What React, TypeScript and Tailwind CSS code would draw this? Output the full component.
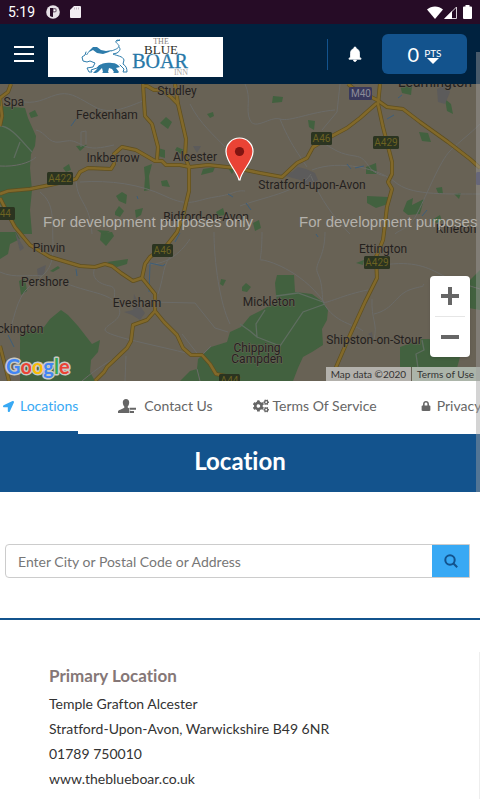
import { FaCogs, FaLocationArrow, FaLock } from "react-icons/fa";
import { MdNotifications } from "react-icons/md";

interface Label {
  text: string;
  x: number;
  y: number;
}

const PLACES: Label[] = [
  { text: "n Spa", x: 9, y: 22 },
  { text: "Studley", x: 177, y: 11 },
  { text: "Feckenham", x: 107, y: 35 },
  { text: "Inkberrow", x: 113, y: 78 },
  { text: "Alcester", x: 195, y: 77 },
  { text: "Stratford-upon-Avon", x: 312, y: 105 },
  { text: "Bidford-on-Avon", x: 206, y: 137 },
  { text: "Kineton", x: 456, y: 149 },
  { text: "Pinvin", x: 49, y: 168 },
  { text: "Ettington", x: 383, y: 169 },
  { text: "Pershore", x: 45, y: 202 },
  { text: "Evesham", x: 137, y: 223 },
  { text: "Mickleton", x: 269, y: 222 },
  { text: "Eckington", x: 17, y: 249 },
  { text: "Shipston-on-Stour", x: 374, y: 260 },
  { text: "Chipping", x: 257, y: 268 },
  { text: "Campden", x: 257, y: 279 },
];

const SHIELDS = [
  { text: "A422", x: 47, y: 88, w: 26 },
  { text: "A44", x: -11, y: 123, w: 26 },
  { text: "A46", x: 311, y: 48, w: 21 },
  { text: "A429", x: 373, y: 52, w: 26 },
  { text: "A46", x: 152, y: 160, w: 21 },
  { text: "A429", x: 364, y: 172, w: 26 },
  { text: "A44", x: 219, y: 290, w: 21 },
];

const GREENS = [
  "M0 22L25 24 28 34 36 52 35 62 31 70 30 84 32 106 30 126 32 150 21 150 10 137 0 120Z",
  "M0 148L16 148 20 155 10 160 8 170 0 175Z",
  "M20 248L44 243 50 235 61 226 68 231 78 242 92 260 100 256 98 268 91 276 90 288 95 297 20 297Z",
  "M180 297L190 287 197 285 198 275 211 263 227 258 230 248 241 243 250 232 262 226 277 217 276 211 275 199 277 191 294 191 295 208 312 210 323 218 328 226 327 236 322 245 323 261 312 268 303 273 298 284 293 297Z",
  "M400 263L422 255 428 255 460 258 460 273 457 284 400 283Z",
  "M470 196L480 186V226L469 224Z",
  "M101 149L112 148 114 152 106 162 100 156Z",
  "M160 39L166 33 172 38 168 45Z",
  "M158 64L165 66 165 74 158 72Z",
  "M177 63L184 66 181 70 175 66Z",
  "M144 83L152 80 149 92 150 106 144 107 145 94Z",
  "M161 97L167 96 170 103 162 102Z",
  "M116 112L122 108 127 111 126 120 119 117Z",
  "M115 128L119 122 124 127 120 133 115 131Z",
  "M135 126L143 124 141 131 136 134Z",
  "M203 85L215 83 213 88 201 91Z",
  "M29 29L35 26 38 32 31 34Z",
  "M63 84L69 80 71 86 66 88Z",
  "M76 62L87 61 80 67Z",
  "M207 30L213 28 214 32 210 34Z",
  "M228 84L233 78 236 83 232 90Z",
  "M216 128L223 124 225 131 218 132Z",
  "M97 146L110 147 104 151Z",
  "M107 178L128 175 127 180 117 183Z",
  "M50 187L58 182 60 184 53 188Z",
  "M19 197L25 194 27 207 21 211Z",
  "M221 195L226 196 223 202 220 200Z",
  "M273 12L283 13 282 18 272 19Z",
  "M308 36L315 37 314 46 309 43Z",
  "M400 1L412 2 411 11 402 9Z",
  "M445 15L451 20 453 30 447 27Z",
  "M419 48L428 49 431 58 422 57Z",
  "M366 83L376 79 377 90 366 90Z",
  "M367 112L388 113 388 120 376 124 367 119Z",
  "M407 117L413 114 412 121 424 115 420 130 408 131 403 127Z",
  "M436 104L442 103 443 110 438 109Z",
  "M454 110L461 109 459 115Z",
  "M432 136L440 131 442 137 436 139Z",
  "M253 139L259 136 261 144 255 147Z",
  "M242 203L246 199 251 203 247 208 242 207Z",
  "M356 179L364 176 363 181Z",
];

const LANES = [
  "M24 18C40 20 48 12 60 10S80 15 95 23 125 24 143 17",
  "M0 82C15 83 30 79 36 73",
  "M36 46C46 48 48 60 60 58S72 56 82 61 100 64 114 61",
  "M81 63V48L86 47V60",
  "M80 98C110 96 140 100 165 112S195 116 215 113 235 106 245 107",
  "M76 97C78 120 90 118 92 150",
  "M40 108C55 120 52 135 53 160S45 190 30 202 14 240 8 250",
  "M60 197C90 210 110 208 118 222S105 240 105 246 160 262 190 270",
  "M118 222L150 218 195 219 215 244 228 248",
  "M145 180C165 182 180 170 190 155",
  "M158 210C165 190 162 180 173 170",
  "M190 20C200 40 215 52 225 63",
  "M245 0C252 15 245 25 250 36S270 32 280 35 310 28 335 26",
  "M280 35C290 60 300 72 307 83",
  "M311 90C300 108 260 114 240 122",
  "M311 92C320 115 335 135 350 150",
  "M312 86C340 75 380 85 395 98S440 110 480 110",
  "M480 40C470 50 460 57 450 67S427 110 418 128 400 145 395 150",
  "M325 60C335 66 340 70 355 72S365 88 385 92",
  "M340 0L337 28 322 46",
  "M325 148C325 175 313 180 318 190S322 215 323 218 345 210 368 206",
  "M323 218C335 240 355 240 363 247",
  "M372 215C371 235 378 240 374 255",
  "M374 230C395 225 395 210 412 205S420 205 424 200",
  "M262 148C262 178 258 176 262 176S300 185 324 218",
  "M377 182C410 176 425 182 440 190S480 205 480 205",
  "M214 148C214 178 220 220 230 240",
  "M0 188C15 195 30 190 42 192",
  "M95 183C90 195 100 200 110 202S110 220 115 222",
  "M126 272L125 297 M82 297C100 282 105 280 125 268",
  "M182 250L200 273 211 262 M197 285L200 297",
];

const RIDGES = [
  "M240 240L250 247 257 253 256 240 265 226",
  "M257 253L280 262 303 228 325 220",
  "M276 212L298 209 323 218",
  "M0 42C10 42 20 55 32 68",
  "M20 58L14 74",
  "M422 256L424 266 416 270 418 284",
];

const TOWNS = [
  "M37 185L46 181 44 190 38 193Z",
  "M124 228L133 226 134 210 140 222 145 229 140 236 132 231Z",
  "M282 91L292 88 298 83 306 85 315 89 318 96 308 103 300 96Z",
  "M437 5L446 0 450 8 445 20 438 18Z",
  "M193 62L201 62 197 69Z",
  "M15 148L24 164 20 167Z",
  "M368 250L372 248 373 254Z",
];

const STREAMS = [
  "M183 134L178 143 M180 149L175 158 M150 180L149 208",
  "M150 179L163 182 165 180 M76 185L77 192",
  "M387 35L394 31 M347 80L351 85 M355 84L364 82",
  "M422 132L427 126 M246 119L251 126 M228 110L233 113",
  "M76 35L71 42 M137 112L138 115 M8 251L14 263 M316 150L318 153 M398 14L402 11",
];

const ROADS = [
  "M0 110L8 107 30 105 50 101 76 95 80 88 88 84 111 85 114 80 114 70 122 63 136 66 155 77 162 77 166 81 180 81 190 83 208 81 236 84 260 89 282 93 297 79 307 74 313 63 332 52 347 44 360 34 377 19",
  "M143 0L145 32 152 40 158 63 157 76",
  "M143 2L147 2 154 6 162 6 171 13 178 20",
  "M175 0L178 20 186 55 185 73 189 83 189 107 183 132 177 148 167 161 150 173 145 180 142 194 133 197 121 189 112 182 105 180 95 183 80 182 50 173 30 161 15 143 8 130 0 114",
  "M142 194L155 210 155 227 164 238 177 251 183 264 191 271 202 271 210 280 216 290 240 295",
  "M155 227L147 236 133 241 131 257 127 264 107 283 104 288 95 297",
  "M0 262L9 297",
  "M11 0L8 8 0 14 M0 14L2 32 0 42",
  "M380 0L378 20 383 43 392 78 392 90 388 98 392 105 387 123 384 148 383 156 376 173 377 194 365 218 350 251 330 297",
  "M348 0L353 4 377 16 387 23 403 25 420 38 448 58 470 75 480 84",
];

const GOOGLE = [
  { letter: "G", fill: "#4285f4" },
  { letter: "o", fill: "#ea4335" },
  { letter: "o", fill: "#fbbc05" },
  { letter: "g", fill: "#4285f4" },
  { letter: "l", fill: "#34a853" },
  { letter: "e", fill: "#ea4335" },
];

function StatusBar() {
  return (
    <div className="flex h-6 items-center justify-between bg-[#260c26] px-2 text-white">
      <div className="flex items-center">
        <span className="w-[38px] font-[Roboto,sans-serif] text-sm">5:19</span>
        <svg width="14" height="14" viewBox="0 0 14 14">
          <circle cx="7" cy="7" r="6.8" fill="#e6e1e6" />
          <path d="M4 3h3v9a5 5 0 0 1-3-1z" fill="#260c26" />
          <path d="M7 3h1.500a2.300 2.300 0 0 1 0 4.600H7z" fill="#7b6a7b" />
          <circle cx="8.500" cy="5.300" r="1" fill="#fff" />
        </svg>
        <svg className="ml-[10px]" width="11" height="14" viewBox="0 0 11 14">
          <path d="M4 1h6a1 1 0 0 1 1 1v10a1 1 0 0 1-1 1H1a1 1 0 0 1-1-1V5z" fill="#f2eef2" />
          <path d="M4.500 2.500v2M6.500 2.500v2M8.500 2.500v2" stroke="#b8adb8" strokeWidth=".8" />
        </svg>
      </div>
      <div className="flex items-center">
        <svg width="16" height="13" viewBox="0 0 16 13">
          <path d="M0 3.500C4.500-.5 11.500-.5 16 3.500L8 13z" fill="#fff" />
        </svg>
        <svg className="ml-px" width="13" height="13" viewBox="0 0 13 13">
          <path d="M12.500 1v11.500H1z" fill="none" stroke="#d6cfd6" />
          <path d="M8 5v8H0z" fill="#fff" />
        </svg>
        <svg className="ml-[6px]" width="9" height="14" viewBox="0 0 9 14">
          <path
            d="M2.500 0h4v1.500H8a1 1 0 0 1 1 1V13a1 1 0 0 1-1 1H1a1 1 0 0 1-1-1V2.500a1 1 0 0 1 1-1h1.500z"
            fill="#fff"
          />
        </svg>
      </div>
    </div>
  );
}

function Logo() {
  return (
    <svg
      className="h-10 w-[175px] bg-white"
      viewBox="0 0 175 40"
      role="img"
      aria-label="The Blue Boar Inn"
    >
      <g fill="none" stroke="#2d7cab" strokeLinejoin="round" strokeLinecap="round">
        <path d="M38 15l-1 3-3 2 1 4 4 1 3-1 5 2-2 4-6 1 2 4 3 0-1-2 6-2 3-3" />
        <path d="M63 14c4-1 8-3 8-5s-4-3-3-5 3 0 4-1l-3 1m2 6c2 2 1 4-2 6l-4 1c4 2 10 2 11 6l-1 4c3 2 4 4 4 8h-4l1-3-4-4" />
      </g>
      <path d="M38 18l3-4 4-4 4 0 4 3 5 1 6-1-3 2-6 2-6-1-4-3-4 2-2 3z" fill="#2d7cab" />
      <path
        d="M50 29c4-3 9-4 14-3 4 0 6 2 8 4l-4 1 3 4-1 1h-5l1-1-2-3-3-1-1 4 1 1h-7l1-1-1-4-4 4-2 1h-3l4-4z"
        fill="#2d7cab"
      />
      <g fontFamily="Liberation Serif, serif" textAnchor="middle">
        <text x="113" y="7" fontSize="8" fill="#85807a">
          THE
        </text>
        <text x="112" y="31" fontSize="20" fill="#2878a8" stroke="#2878a8" strokeWidth=".3">
          BOAR
        </text>
        <text x="113" y="17" fontSize="13" fill="#2c2c26" stroke="#fff" strokeWidth="1" paintOrder="stroke">
          BLUE
        </text>
        <text x="133" y="38" fontSize="8" fill="#aaa69f">
          INN
        </text>
      </g>
    </svg>
  );
}

function Header() {
  return (
    <header className="flex h-[60px] items-center bg-[#00223f] text-white">
      <button type="button" aria-label="Menu" className="ml-[14px] flex w-5 flex-col gap-[4px]">
        <span className="h-[2px] w-full bg-white" />
        <span className="my-px h-[2px] w-full bg-white" />
        <span className="h-[2px] w-full bg-white" />
      </button>
      <a href="#home" className="mt-[6px] ml-[14px]">
        <Logo />
      </a>
      <div className="ml-auto flex items-center">
        <span className="h-[31px] w-px bg-[#13538d]" />
        <button type="button" aria-label="Notifications" className="mx-[15px] flex w-6 justify-center">
          <MdNotifications size={18} stroke="currentColor" strokeWidth={1} />
        </button>
        <button
          type="button"
          className="mr-[13px] flex h-10 w-[85px] items-center justify-center gap-[5px] rounded-md bg-[#13538d]"
        >
          <span className="text-xl">0</span>
          <span className="flex flex-col items-center pt-1 text-[10px] leading-[10px]">
            PTS
            <svg width="12" height="6" viewBox="0 0 12 6">
              <path d="M0 0h12L6 6z" fill="#fff" />
            </svg>
          </span>
        </button>
      </div>
    </header>
  );
}

function MapView() {
  return (
    <div className="relative h-[297px] overflow-hidden bg-[#686255]">
      <svg className="h-full w-full" viewBox="0 0 480 297" preserveAspectRatio="xMidYMid slice">
        <g fill="#42613f">
          {GREENS.map((d) => (
            <path key={d} d={d} />
          ))}
        </g>
        <g fill="#5c5b5b">
          {TOWNS.map((d) => (
            <path key={d} d={d} />
          ))}
        </g>
        <g fill="none" stroke="#6b6b68">
          {LANES.map((d) => (
            <path key={d} d={d} />
          ))}
        </g>
        <g fill="none" stroke="#5f6d60">
          {RIDGES.map((d) => (
            <path key={d} d={d} strokeWidth="1.300" />
          ))}
        </g>
        <g fill="none" stroke="#3d5e7a">
          {STREAMS.map((d) => (
            <path key={d} d={d} />
          ))}
        </g>
        <g fill="none" strokeLinejoin="round">
          {ROADS.map((d) => (
            <path key={d} d={d} stroke="#5f4f1f" strokeWidth="4" />
          ))}
          {ROADS.map((d) => (
            <path key={d} d={d} stroke="#82692a" strokeWidth="2.600" />
          ))}
        </g>
        <g fontFamily="Roboto, sans-serif" fontSize="10" textAnchor="middle">
          {SHIELDS.map((s) => (
            <g key={`${s.text}-${s.x}`}>
              <rect x={s.x} y={s.y} width={s.w} height="13" rx="1.500" fill="#2b3420" />
              <text x={s.x + s.w / 2} y={s.y + 10} fill="#6c6222">
                {s.text}
              </text>
            </g>
          ))}
          <rect x="349" y="3" width="23" height="13" rx="1.500" fill="#39395c" />
          <text x="361" y="13" fill="#8c8c98">
            M40
          </text>
          <rect x="476" y="88" width="12" height="13" rx="1.500" fill="#39395c" />
        </g>
        <g
          fontFamily="Roboto, sans-serif"
          fontSize="12"
          textAnchor="middle"
          fill="#24211e"
          stroke="#6b6458"
          strokeWidth="1"
          paintOrder="stroke"
        >
          {PLACES.map((p) => (
            <text key={p.text} x={p.x} y={p.y}>
              {p.text}
            </text>
          ))}
          <text x="435" y="3" fontSize="14">
            Leamington
          </text>
        </g>
        <g fontFamily="Liberation Sans, sans-serif" fontSize="15" fill="#b4b1ab">
          <text x="43" y="143">
            For development purposes only
          </text>
          <text x="299" y="143">
            For development purposes
          </text>
        </g>
        <path
          d="M239 96C237 87 226 78 226 67.500a13.500 13.500 0 0 1 27 0C253 78 241 87 240 96z"
          fill="#ea4335"
          stroke="#fff"
          strokeWidth="1.200"
        />
        <circle cx="239.500" cy="67.500" r="4.600" fill="#811411" />
      </svg>

      <svg className="absolute bottom-0 left-1" width="72" height="28" viewBox="0 0 72 28">
        <text
          x="2"
          y="21"
          fontFamily="Lato, sans-serif"
          fontSize="20"
          fontWeight="700"
          stroke="#c9c9c5"
          strokeWidth="3"
          strokeLinejoin="round"
          paintOrder="stroke"
        >
          {GOOGLE.map((g, i) => (
            <tspan key={i} fill={g.fill}>
              {g.letter}
            </tspan>
          ))}
        </text>
      </svg>

      <div className="absolute right-[10px] bottom-6 flex w-10 flex-col items-center rounded-sm bg-white text-[#666] shadow">
        <button type="button" aria-label="Zoom in" className="flex h-10 w-full items-center justify-center">
          <svg width="18" height="18" viewBox="0 0 18 18">
            <path d="M7 0h4v7h7v4h-7v7H7v-7H0V7h7z" fill="currentColor" />
          </svg>
        </button>
        <span className="h-px w-[30px] bg-[#e6e6e6]" />
        <button type="button" aria-label="Zoom out" className="flex h-10 w-full items-center justify-center">
          <svg width="18" height="4" viewBox="0 0 18 4">
            <path d="M0 0h18v4H0z" fill="currentColor" />
          </svg>
        </button>
      </div>

      <div className="absolute right-0 bottom-0 flex h-[14px] text-[10px] leading-[14px] text-[#333]">
        <span className="bg-[#b3b1ac] px-[5px]">Map data ©2020</span>
        <a href="#terms" className="ml-px bg-[#acb5aa] pr-[6px] pl-[5px]">
          Terms of Use
        </a>
      </div>
    </div>
  );
}

function PersonIcon() {
  return (
    <svg width="18" height="14" viewBox="0 0 18 14" fill="currentColor">
      <path d="M8 0c2 0 3.200 1.300 3.200 3.200 0 1.700-.6 3.300-1.500 4.200v1.200l1.300.7v2.200h2V14H0v-1.500c0-1.500 4-2.300 6.300-3.800V7.400C5.400 6.500 4.800 4.900 4.800 3.200 4.800 1.300 6 0 8 0z" />
      <path
        d="M11.500 8.800H18v2h-6.500zM11.500 12H16v2h-4.500z"
        stroke="#fff"
        strokeWidth="1"
        paintOrder="stroke"
      />
    </svg>
  );
}

function TabBar() {
  return (
    <nav className="flex h-[53px] overflow-hidden text-sm whitespace-nowrap text-[#666]">
      <a
        href="#locations"
        className="flex shrink-0 items-center border-b-[3px] border-[#13538d] pl-[3px] text-[#38a9f4]"
      >
        <FaLocationArrow size={11} className="mr-[6px]" />
        Locations
      </a>
      <a href="#contact" className="ml-10 flex shrink-0 items-center border-b-[3px] border-transparent">
        <span className="mr-2">
          <PersonIcon />
        </span>
        Contact Us
      </a>
      <a href="#service" className="ml-10 flex shrink-0 items-center border-b-[3px] border-transparent">
        <FaCogs size={16} className="mr-1" />
        Terms Of Service
      </a>
      <a href="#privacy" className="ml-11 flex shrink-0 items-center border-b-[3px] border-transparent">
        <FaLock size={10} className="mr-[6px]" />
        Privacy
      </a>
    </nav>
  );
}

function SearchForm() {
  return (
    <form className="mt-[52px] mr-[10px] ml-[5px] flex h-[34px] rounded-l border border-[#ccc]">
      <input
        type="text"
        aria-label="Location search"
        placeholder="Enter City or Postal Code or Address"
        className="min-w-0 flex-1 rounded-l px-3 pt-[2px] text-sm outline-none placeholder:text-[#777]"
      />
      <button
        type="button"
        aria-label="Search"
        className="flex w-[37px] items-center justify-center bg-[#38a9f4] text-[#13538d]"
      >
        <svg width="14" height="14" viewBox="0 0 14 14" fill="none" stroke="currentColor" strokeWidth="2">
          <circle cx="6" cy="6" r="4.700" />
          <path d="M9.500 9.500l3.700 3.700" />
        </svg>
      </button>
    </form>
  );
}

export default function App() {
  return (
    <div className="relative overflow-hidden bg-white font-[Lato,sans-serif] [font-variant-ligatures:none]">
      <StatusBar />
      <Header />
      <MapView />
      <TabBar />
      <h1 className="bg-[#13538d] pt-[9px] pb-[13px] text-center text-2xl leading-9 font-bold text-white">
        Location
      </h1>
      <SearchForm />
      <hr className="mt-10 border-t-2 border-[#13538d]" />
      <section className="mt-8 border-r border-[#eee] pt-[11px] pb-2 pl-[49px] text-sm leading-[25px] text-[#333]">
        <h2 className="mb-[3px] text-[17px] font-bold text-[#857777]">Primary Location</h2>
        <p>Temple Grafton Alcester</p>
        <p>Stratford-Upon-Avon, Warwickshire B49 6NR</p>
        <p>01789 750010</p>
        <p>
          <a href="#website">www.theblueboar.co.uk</a>
        </p>
      </section>
      {/* scroll thumb */}
      <div className="pointer-events-none absolute top-[52px] right-0 h-[440px] w-1 bg-[#a0a0a0]/45" />
    </div>
  );
}
